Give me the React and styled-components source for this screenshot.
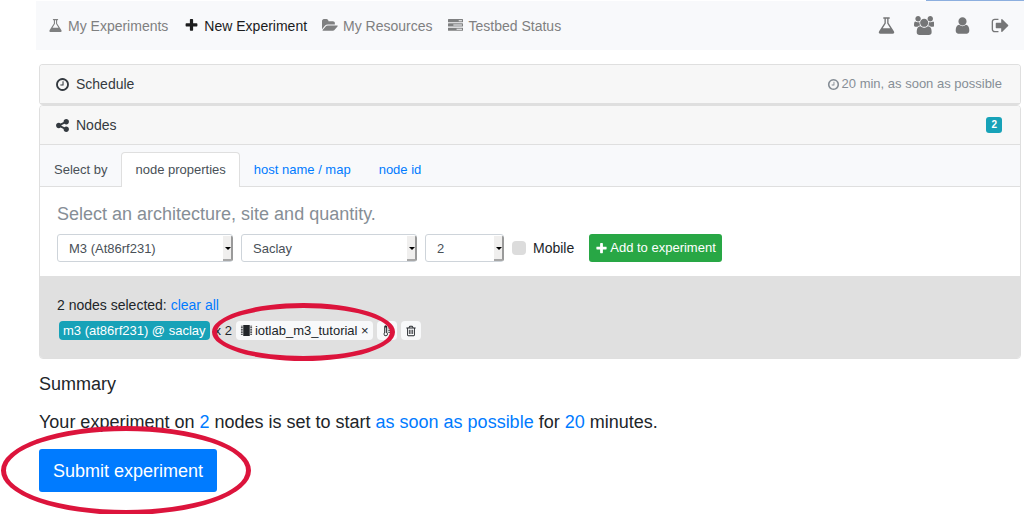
import React from "react";
import styled, { createGlobalStyle, css } from "styled-components";

const GlobalStyle = createGlobalStyle`
  *, *::before, *::after { box-sizing: border-box; }
  body {
    margin: 0;
    background: #fff;
    color: #212529;
    font-family: "Liberation Sans", Arial, sans-serif;
    font-size: 14px;
    line-height: 20px;
  }
  button, input, select { font: inherit; }
  a { color: #007bff; text-decoration: none; }
`;

/* ---------- icons ---------- */

const paths = {
  flask:
    "M1591 1448q56 89 21.5 152.5t-140.5 63.5h-1152q-106 0-140.5-63.5t21.5-152.5l503-793v-399h-64q-26 0-45-19t-19-45 19-45 45-19h512q26 0 45 19t19 45-19 45-45 19h-64v399zm-779-725l-272 429h712l-272-429-20-31v-436h-128v436z",
  plus:
    "M1600 736v192q0 40-28 68t-68 28h-416v416q0 40-28 68t-68 28h-192q-40 0-68-28t-28-68v-416h-416q-40 0-68-28t-28-68v-192q0-40 28-68t68-28h416v-416q0-40 28-68t68-28h192q40 0 68 28t28 68v416h416q40 0 68 28t28 68z",
  folder:
    "M1879 952q0 31-31 66l-336 396q-43 51-120.5 86.5t-143.5 35.5h-1088q-34 0-60.5-13t-26.5-43q0-31 31-66l336-396q43-51 120.5-86.5t143.5-35.5h1088q34 0 60.5 13t26.5 43zm-343-344v160h-832q-94 0-197 47.5t-164 119.5l-337 396-5 6q0-4-.5-12.5t-.5-12.5v-960q0-92 66-158t158-66h320q92 0 158 66t66 158v32h544q92 0 158 66t66 158z",
  tasks:
    "M1024 1408h640v-128h-640v128zm-384-512h1024v-128h-1024v128zm640-512h384v-128h-384v128zm512 832v256q0 26-19 45t-45 19h-1664q-26 0-45-19t-19-45v-256q0-26 19-45t45-19h1664q26 0 45 19t19 45zm0-512v256q0 26-19 45t-45 19h-1664q-26 0-45-19t-19-45v-256q0-26 19-45t45-19h1664q26 0 45 19t19 45zm0-512v256q0 26-19 45t-45 19h-1664q-26 0-45-19t-19-45v-256q0-26 19-45t45-19h1664q26 0 45 19t19 45z",
  users:
    "M593 896q-162 5-265 128h-134q-82 0-138-40.5t-56-118.5q0-353 124-353 6 0 43.5 21t97.5 42.5 119 21.5q67 0 133-23-5 37-5 66 0 139 81 256zm1071 637q0 120-73 189.5t-194 69.5h-874q-121 0-194-69.5t-73-189.5q0-53 3.5-103.5t14-109 26.5-108.5 43-97.5 62-81 85.5-53.5 111.5-20q10 0 43 21.5t73 48 107 48 135 21.5 135-21.5 107-48 73-48 43-21.5q61 0 111.5 20t85.5 53.5 62 81 43 97.5 26.5 108.5 14 109 3.5 103.5zm-1024-1277q0 106-75 181t-181 75-181-75-75-181 75-181 181-75 181 75 75 181zm704 384q0 159-112.5 271.5t-271.5 112.5-271.5-112.5-112.5-271.5 112.5-271.5 271.5-112.5 271.5 112.5 112.5 271.5zm576 225q0 78-56 118.5t-138 40.5h-134q-103-123-265-128 81-117 81-256 0-29-5-66 66 23 133 23 59 0 119-21.5t97.5-42.5 43.5-21q124 0 124 353zm-128-609q0 106-75 181t-181 75-181-75-75-181 75-181 181-75 181 75 75 181z",
  user:
    "M1536 1399q0 109-62.5 187t-150.5 78h-854q-88 0-150.5-78t-62.5-187q0-85 8.5-160.5t31.5-152 58.5-131 94-89 134.5-34.5q131 128 313 128t313-128q76 0 134.5 34.5t94 89 58.5 131 31.5 152 8.5 160.5zm-256-887q0 159-112.5 271.5t-271.5 112.5-271.5-112.5-112.5-271.5 112.5-271.5 271.5-112.5 271.5 112.5 112.5 271.5z",
  signOut:
    "M704 1440q0 4 1 20t.5 26.5-3 23.5-10 19.5-20.5 6.5h-320q-119 0-203.5-84.5t-84.5-203.5v-704q0-119 84.5-203.5t203.5-84.5h320q13 0 22.5 9.5t9.5 22.5q0 4 1 20t.5 26.5-3 23.5-10 19.5-20.5 6.5h-320q-66 0-113 47t-47 113v704q0 66 47 113t113 47h312l11.5 1 11.5 3 8 5.5 7 9 2 13.5zm928-544q0 26-19 45l-544 544q-19 19-45 19t-45-19-19-45v-288h-448q-26 0-45-19t-19-45v-384q0-26 19-45t45-19h448v-288q0-26 19-45t45-19 45 19l544 544q19 19 19 45z",
  clock:
    "M1024 544v448q0 14-9 23t-23 9h-320q-14 0-23-9t-9-23v-64q0-14 9-23t23-9h224v-352q0-14 9-23t23-9h64q14 0 23 9t9 23zm416 352q0-148-73-273t-198-198-273-73-273 73-198 198-73 273 73 273 198 198 273 73 273-73 198-198 73-273zm224 0q0 209-103 385.5t-279.5 279.5-385.5 103-385.5-103-279.5-279.5-103-385.5 103-385.5 279.5-279.5 385.5-103 385.5 103 279.5 279.5 103 385.5z",
  share:
    "M1344 1024q133 0 226.5 93.5t93.5 226.5-93.5 226.5-226.5 93.5-226.5-93.5-93.5-226.5q0-12 2-34l-360-180q-92 86-218 86-133 0-226.5-93.5t-93.5-226.5 93.5-226.5 226.5-93.5q126 0 218 86l360-180q-2-22-2-34 0-133 93.5-226.5t226.5-93.5 226.5 93.5 93.5 226.5-93.5 226.5-226.5 93.5q-126 0-218-86l-360 180q2 22 2 34t-2 34l360 180q92-86 218-86z",
  trash:
    "M704 736v576q0 14-9 23t-23 9h-64q-14 0-23-9t-9-23v-576q0-14 9-23t23-9h64q14 0 23 9t9 23zm256 0v576q0 14-9 23t-23 9h-64q-14 0-23-9t-9-23v-576q0-14 9-23t23-9h64q14 0 23 9t9 23zm256 0v576q0 14-9 23t-23 9h-64q-14 0-23-9t-9-23v-576q0-14 9-23t23-9h64q14 0 23 9t9 23zm128 724v-948h-896v948q0 22 7 40.5t14.5 27 10.5 8.5h832q3 0 10.5-8.5t14.5-27 7-40.5zm-672-1076h448l-48-117q-7-9-17-11h-317q-10 2-17 11zm928 32v64q0 14-9 23t-23 9h-96v948q0 83-47 143.5t-113 60.5h-832q-66 0-113-58.5t-47-141.5v-952h-96q-14 0-23-9t-9-23v-64q0-14 9-23t23-9h309l70-167q15-37 54-63t79-26h320q40 0 79 26t54 63l70 167h309q14 0 23 9t9 23z",
  chip:
    "M448 128h896v1536h-896zM128 224h256v128h-256zM128 448h256v128h-256zM128 672h256v128h-256zM128 896h256v128h-256zM128 1120h256v128h-256zM128 1344h256v128h-256zM1408 224h256v128h-256zM1408 448h256v128h-256zM1408 672h256v128h-256zM1408 896h256v128h-256zM1408 1120h256v128h-256zM1408 1344h256v128h-256z",
  thermometer:
    "M896 1344q0 80-56 136t-136 56-136-56-56-136q0-64 36-114t92-70v-776h128v776q56 20 92 70t36 114zm128 0q0-130-96-224v-864q0-93-65.500-158.500t-158.500-65.500-158.500 65.500-65.500 158.500v864q-96 94-96 224 0 133 93.500 226.500t226.500 93.500 226.500-93.500 93.500-226.500zM1088 256h256v128h-256zM1088 512h256v128h-256zM1088 768h256v128h-256zM1088 1024h256v128h-256z",
};

const wide = { users: 1920, folder: 1920 };

const Glyph = styled.svg`
  display: block;
  flex: none;
  height: ${(p) => p.$size}px;
  fill: currentColor;
`;

function Icon({ name, size = 14 }) {
  return (
    <Glyph
      $size={size}
      viewBox={`0 0 ${wide[name] || 1792} 1792`}
      fillRule={name === "thermometer" ? "evenodd" : "nonzero"}
      aria-hidden="true"
    >
      <path d={paths[name]} />
    </Glyph>
  );
}

const IconSlot = styled.span`
  display: flex;
  flex: none;
  justify-content: center;
  width: 18px;
`;

/* ---------- navigation ---------- */

const TopEdge = styled.div`
  display: flex;
  justify-content: flex-end;
  height: 1px;
  &::after {
    content: "";
    width: 98px;
    background: #8cafdf;
  }
`;

const Page = styled.div`
  padding: 0 0 22px 36px;
`;

const Navbar = styled.nav`
  display: flex;
  align-items: center;
  justify-content: space-between;
  height: 49px;
  padding: 0 13px 0 10px;
  background: #f8f9fb;
`;

const NavGroup = styled.div`
  display: flex;
  gap: ${(p) => p.$gap}px;
`;

const NavLink = styled.a`
  display: flex;
  align-items: center;
  gap: 4px;
  color: ${(p) => (p.$active ? "#1b1c1d" : "#7f8081")};
`;

const NavIconLink = styled(NavLink)`
  justify-content: center;
  width: 22px;
  color: #757677;
`;

/* ---------- cards ---------- */

const Content = styled.main`
  padding: 14px 3px 0;
`;

const Card = styled.section`
  border: 1px solid #dfdfdf;
  border-radius: 4px;
  ${(p) => p.$collapsed && css`border-bottom-width: 2px;`}
`;

const CardHeader = styled.header`
  display: flex;
  align-items: center;
  justify-content: space-between;
  height: 38px;
  padding: 0 18px 0 13px;
  border-radius: 3px 3px 0 0;
  background: #f7f7f7;
  ${(p) => p.$open && css`
    height: 39px;
    border-bottom: 1px solid #dfdfdf;
  `}
`;

const CardTitle = styled.h2`
  display: flex;
  align-items: center;
  gap: 5px;
  margin: 0;
  color: #343a40;
  font-size: 14px;
  font-weight: 400;
`;

const Muted = styled.span`
  display: flex;
  align-items: center;
  gap: 2px;
  color: #868e96;
  font-size: 13px;
`;

const CountBadge = styled.span`
  padding: 0 5px;
  border-radius: 3px;
  background: #17a2b8;
  color: #fff;
  font-size: 10px;
  font-weight: 700;
  line-height: 16px;
`;

const TabBar = styled.div`
  display: flex;
  align-items: flex-end;
  height: 42px;
  padding-left: 14px;
  border-bottom: 1px solid #dfdfdf;
  background: #f8f9fb;
  color: #495057;
  font-size: 13px;
`;

const TabLabel = styled.span`
  padding: 7px 14px 6px 0;
`;

const Tab = styled.button`
  height: 35px;
  margin-bottom: -1px;
  padding: 0 13px;
  border: 1px solid transparent;
  border-bottom: 0;
  border-radius: 4px 4px 0 0;
  background: none;
  color: #007bff;
  ${(p) => p.$active && css`
    border-color: #dfdfdf;
    background: #fff;
    color: #495057;
  `}
`;

const CardBody = styled.div`
  padding: 17px;
  padding-bottom: 14px;
`;

const Lead = styled.p`
  margin: 0 0 10px;
  color: #868e96;
  font-size: 18px;
`;

const Form = styled.form`
  display: flex;
  align-items: center;
  gap: 8px;
`;

const SelectBox = styled.span`
  position: relative;
  flex: none;
  width: ${(p) => p.$width}px;
  height: 28px;
  &::before {
    content: "";
    position: absolute;
    top: 2px;
    right: 0;
    bottom: 1px;
    width: 10px;
    border-right: 2px solid #9a9a9a;
    border-bottom: 2px solid #a8a8a8;
    border-radius: 0 2px 2px 0;
    background: #f0efee;
    pointer-events: none;
  }
  &::after {
    content: "";
    position: absolute;
    top: 13px;
    right: 2px;
    border: 3px solid transparent;
    border-top-color: #000;
    border-bottom: 0;
    pointer-events: none;
  }
`;

const Select = styled.select`
  width: 100%;
  height: 100%;
  padding: 1px 11px 0;
  border: 1px solid #ced4da;
  border-radius: 3px;
  appearance: none;
  background: #fff;
  color: #495057;
  font-size: 13px;
`;

const CheckLabel = styled.label`
  display: flex;
  align-items: center;
  gap: 7px;
  margin-right: 7px;
`;

const Checkbox = styled.input`
  width: 14px;
  height: 14px;
  margin: 0;
  border-radius: 4px;
  appearance: none;
  background: #dcdcdc;
  &:checked { background: #007bff; }
`;

const Button = styled.button`
  display: inline-flex;
  align-items: center;
  justify-content: center;
  border: 0;
  border-radius: 3px;
  color: #fff;
  cursor: pointer;
`;

const AddButton = styled(Button)`
  gap: 2px;
  height: 28px;
  padding: 0 6px;
  background: #28a745;
  font-size: 13px;
`;

const SubmitButton = styled(Button)`
  height: 43px;
  padding: 0 14px;
  background: #007bff;
  font-size: 18px;
`;

const Selection = styled.div`
  padding: 19px 17px 18px;
  border-radius: 0 0 3px 3px;
  background: #e0e0e0;
`;

const SelectionRow = styled.div`
  display: flex;
  align-items: center;
  gap: 4px;
  margin-top: 6px;
  padding-left: 2px;
  font-size: 13px;
  line-height: 19px;
`;

const NodeBadge = styled.span`
  padding: 0 4px;
  border-radius: 4px;
  background: #17a2b8;
  color: #fff;
`;

const Quantity = styled.span`
  padding-left: 1px;
`;

const Chip = styled.button`
  display: flex;
  align-items: center;
  gap: 2px;
  height: 19px;
  padding: 0 4px;
  border: 0;
  border-radius: 4px;
  background: #f8f9fa;
  color: #212529;
`;

/* ---------- summary ---------- */

const SummaryTitle = styled.h2`
  margin: 15px 0 18px;
  font-size: 18px;
  font-weight: 400;
`;

const SummaryText = styled.p`
  margin: 0 0 17px;
  font-size: 18px;
`;

/* Hand-marked highlight ring drawn over the control it wraps. */
const Highlight = styled.span`
  position: relative;
  display: inline-flex;
  &::after {
    content: "";
    position: absolute;
    inset: ${(p) => p.$inset};
    border: 5px solid #dc143c;
    border-radius: 50%;
    pointer-events: none;
    z-index: 1;
  }
`;

const navItems = [
  { icon: "flask", label: "My Experiments" },
  { icon: "plus", label: "New Experiment", active: true },
  { icon: "folder", label: "My Resources" },
  { icon: "tasks", label: "Testbed Status" },
];

const accountItems = [
  { icon: "flask", label: "Experiments" },
  { icon: "users", label: "Users" },
  { icon: "user", label: "Profile" },
  { icon: "signOut", label: "Sign out" },
];

function Dropdown({ label, width, options }) {
  return (
    <SelectBox $width={width}>
      <Select aria-label={label}>
        {options.map((o) => (
          <option key={o}>{o}</option>
        ))}
      </Select>
    </SelectBox>
  );
}

export default function App() {
  return (
    <>
      <GlobalStyle />
      <TopEdge />
      <Page>
        <Navbar>
          <NavGroup $gap={14}>
            {navItems.map((item) => (
              <NavLink key={item.label} href="#" $active={item.active}>
                <IconSlot><Icon name={item.icon} size={15} /></IconSlot>
                {item.label}
              </NavLink>
            ))}
          </NavGroup>
          <NavGroup $gap={16}>
            {accountItems.map((item) => (
              <NavIconLink key={item.label} href="#" aria-label={item.label}>
                <Icon name={item.icon} size={19} />
              </NavIconLink>
            ))}
          </NavGroup>
        </Navbar>

        <Content>
          <Card $collapsed>
            <CardHeader>
              <CardTitle>
                <IconSlot><Icon name="clock" size={15} /></IconSlot>
                Schedule
              </CardTitle>
              <Muted><Icon name="clock" size={13} />20 min, as soon as possible</Muted>
            </CardHeader>
          </Card>

          <Card>
            <CardHeader $open>
              <CardTitle>
                <IconSlot><Icon name="share" size={15} /></IconSlot>
                Nodes
              </CardTitle>
              <CountBadge>2</CountBadge>
            </CardHeader>
            <TabBar>
              <TabLabel>Select by</TabLabel>
              <Tab type="button" $active>node properties</Tab>
              <Tab type="button">host name / map</Tab>
              <Tab type="button">node id</Tab>
            </TabBar>
            <CardBody>
              <Lead>Select an architecture, site and quantity.</Lead>
              <Form onSubmit={(e) => e.preventDefault()}>
                <Dropdown label="Architecture" width={176} options={["M3 (At86rf231)"]} />
                <Dropdown label="Site" width={176} options={["Saclay"]} />
                <Dropdown label="Quantity" width={79} options={["2"]} />
                <CheckLabel>
                  <Checkbox type="checkbox" />
                  Mobile
                </CheckLabel>
                <AddButton type="submit">
                  <Icon name="plus" size={13} />
                  Add to experiment
                </AddButton>
              </Form>
            </CardBody>
            <Selection>
              2 nodes selected: <a href="#">clear all</a>
              <SelectionRow>
                <NodeBadge>m3 (at86rf231) @ saclay</NodeBadge>
                <Quantity>x 2</Quantity>
                <Highlight $inset="-18px -22px -21px -24px">
                  <Chip type="button">
                    <Icon name="chip" size={13} />
                    iotlab_m3_tutorial ×
                  </Chip>
                </Highlight>
                <Chip type="button" aria-label="Sensors"><Icon name="thermometer" size={12} /></Chip>
                <Chip type="button" aria-label="Remove"><Icon name="trash" size={12} /></Chip>
              </SelectionRow>
            </Selection>
          </Card>

          <SummaryTitle>Summary</SummaryTitle>
          <SummaryText>
            Your experiment on <a href="#">2</a> nodes is set to start{" "}
            <a href="#">as soon as possible</a> for <a href="#">20</a> minutes.
          </SummaryText>
          <Highlight $inset="-23px -34px -23px -38px">
            <SubmitButton type="button">Submit experiment</SubmitButton>
          </Highlight>
        </Content>
      </Page>
    </>
  );
}
